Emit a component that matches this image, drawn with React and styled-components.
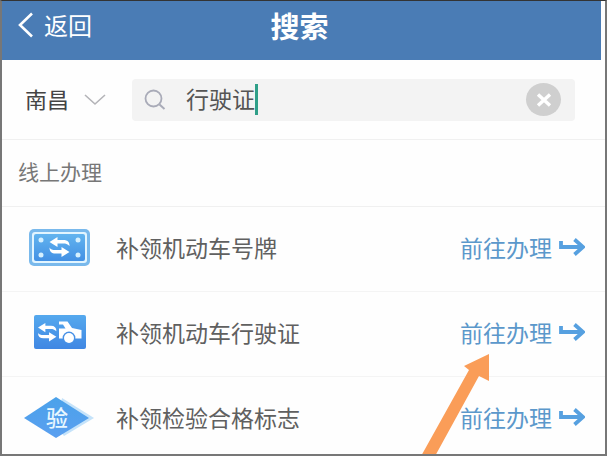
import React, { useState } from "react";
import styled, { createGlobalStyle } from "styled-components";

const services = [
  { name: "补领机动车号牌", Icon: PlateIcon },
  { name: "补领机动车行驶证", Icon: LicenceIcon, pointed: true },
  { name: "补领检验合格标志", Icon: InspectionIcon },
];

function App() {
  const [keyword, setKeyword] = useState("行驶证");

  return (
    <Screen>
      <GlobalStyle />
      <Header>
        <BackButton type="button">
          <svg width="16" height="26" viewBox="0 0 16 26" fill="none">
            <path d="M14 1.5 2 13l12 11.5" stroke="#fff" strokeWidth="2.6" />
          </svg>
          返回
        </BackButton>
        <Title>搜索</Title>
      </Header>

      <SearchBar>
        <City>
          <CitySelect aria-label="城市" defaultValue="南昌">
            <option>南昌</option>
          </CitySelect>
          <svg width="22" height="12" viewBox="0 0 22 12" fill="none">
            <path d="m1 1 10 9L21 1" stroke="#b4b4b8" strokeWidth="1.6" />
          </svg>
        </City>
        <SearchBox>
          <svg width="22" height="22" viewBox="0 0 22 22" fill="none">
            <circle cx="9.5" cy="9.5" r="8" stroke="#a9abb8" strokeWidth="1.8" />
            <path d="m15.5 15.5 5 4.5" stroke="#a9abb8" strokeWidth="2" />
          </svg>
          <Typed>
            <SearchInput
              type="text"
              aria-label="搜索"
              value={keyword}
              onChange={(e) => setKeyword(e.target.value)}
            />
            <Caret />
          </Typed>
          <ClearButton
            type="button"
            aria-label="清除"
            onClick={() => setKeyword("")}
          >
            <svg width="16" height="14" viewBox="0 0 16 14">
              <path
                d="m2 1.5 12 11M14 1.5l-12 11"
                stroke="#fff"
                strokeWidth="3.4"
              />
            </svg>
          </ClearButton>
        </SearchBox>
      </SearchBar>

      <SectionTitle>线上办理</SectionTitle>
      <List>
        {services.map(({ name, Icon, pointed }) => (
          <Row key={name}>
            <Icon />
            <Name>{name}</Name>
            <Action href="#">
              前往办理
              <svg width="26" height="18" viewBox="0 0 26 18" fill="none">
                <path
                  d="M2 3v6h21M15.5 1.5 24 9l-8.500 7.500"
                  stroke="#56a0e0"
                  strokeWidth="3.8"
                />
              </svg>
            </Action>
            {pointed && <Pointer />}
          </Row>
        ))}
      </List>
    </Screen>
  );
}

export default App;

function SwapArrows() {
  return (
    <g fill="#fff">
      <path d="M0 5 8 0v3h6c4 0 6 2 6 6-2-2-4-2.500-6-2.500H8V10Z" />
      <path d="M20 15 12 10v3H6c-3 0-5-.5-6-2.500 0 4 2 6 6 6h6V20Z" />
    </g>
  );
}

function PlateIcon() {
  return (
    <IconSvg viewBox="0 0 70 48">
      <defs>
        <linearGradient id="plate" x2="0" y2="1">
          <stop offset="0" stopColor="#62b4ef" />
          <stop offset="1" stopColor="#4390e4" />
        </linearGradient>
      </defs>
      <rect x="5" y="4" width="61" height="37" rx="5" fill="#79b9ec" />
      <rect x="8" y="7" width="55" height="31" rx="3" fill="#e2f5ff" />
      <rect x="10" y="9" width="51" height="27" rx="2" fill="url(#plate)" />
      <g fill="#d5f0ff">
        <circle cx="17" cy="15" r="2.5" />
        <circle cx="54" cy="15" r="2.5" />
        <circle cx="17" cy="30" r="2.5" />
        <circle cx="54" cy="30" r="2.5" />
      </g>
      <g transform="translate(25.5 12)">
        <SwapArrows />
      </g>
    </IconSvg>
  );
}

function LicenceIcon() {
  return (
    <IconSvg viewBox="0 0 70 48">
      <defs>
        <linearGradient id="licence" x2="0" y2="1">
          <stop offset="0" stopColor="#55a9ee" />
          <stop offset="1" stopColor="#4087e3" />
        </linearGradient>
      </defs>
      <rect x="10" y="5" width="52" height="34" rx="2" fill="url(#licence)" />
      <g transform="translate(14 13) scale(.92)">
        <SwapArrows />
      </g>
      <path
        d="M35 11.500h8.500l4.500 6.500 9.500 2v8.500H35V18.500h6.500l-2.500-4h-4Z"
        fill="#fff"
      />
      <circle cx="45" cy="28" r="6.4" fill="#4690e6" />
      <circle cx="45" cy="28" r="5" fill="#fff" />
    </IconSvg>
  );
}

function InspectionIcon() {
  return (
    <IconSvg viewBox="0 0 70 48">
      <defs>
        <linearGradient id="inspection" x2="0" y2="1">
          <stop offset="0" stopColor="#4ba2ea" />
          <stop offset="1" stopColor="#5a9ff0" />
        </linearGradient>
      </defs>
      <path d="m38 3 32 20-30 18-8-10Z" fill="#c5e3fa" />
      <path d="M32 2 65 23 32 43 0 23Z" fill="url(#inspection)" />
      <IconText x="33" y="31">
        验
      </IconText>
    </IconSvg>
  );
}

function Pointer() {
  return (
    <PointerSvg viewBox="0 0 72 104">
      <path d="M68 0v27l-10-5L13 104H-1L48 16l-5-4Z" fill="#fa9d58" />
    </PointerSvg>
  );
}

const GlobalStyle = createGlobalStyle`
  * {
    box-sizing: border-box;
  }
  body {
    margin: 0;
    background: #fff;
  }
  body, button, input, select {
    font-family: "Noto Sans CJK SC", "Liberation Sans", sans-serif;
  }
`;

const Screen = styled.div`
  height: 100vh;
  overflow-y: auto;
  scrollbar-width: none;
  border: solid #777;
  border-width: 1px 2px 2px;
  border-top-color: #333;
  background: #fefefe;
`;

const Header = styled.header`
  display: grid;
  grid-template-columns: 1fr auto 1fr;
  align-items: center;
  height: 59px;
  margin-right: 4px;
  padding: 0 20px 12px 16px;
  background: #4a7cb5;
  color: #fff;
`;

const BackButton = styled.button`
  display: flex;
  align-items: center;
  gap: 10px;
  padding: 0;
  border: none;
  background: none;
  color: inherit;
  font-size: 24px;
  line-height: 32px;
  cursor: pointer;
`;

const Title = styled.h1`
  margin: 0;
  font-size: 29px;
  line-height: 40px;
  font-weight: 700;
`;

const SearchBar = styled.div`
  display: flex;
  align-items: center;
  gap: 26px;
  height: 80px;
  padding: 0 30px 0 23px;
  border-bottom: 1px solid #f0f0f0;
`;

const City = styled.div`
  display: flex;
  align-items: center;
  gap: 14px;
`;

const CitySelect = styled.select`
  appearance: none;
  padding: 0 0 4px;
  border: none;
  background: none;
  color: #444;
  font-size: 22px;
  line-height: 32px;
`;

const SearchBox = styled.div`
  display: flex;
  flex: 1;
  align-items: center;
  gap: 20px;
  height: 42px;
  padding: 0 14px 0 12px;
  border-radius: 4px;
  background: #f3f3f3;
`;

const Typed = styled.div`
  display: flex;
  flex: 1;
  align-items: center;
`;

const SearchInput = styled.input`
  field-sizing: content;
  padding: 0 0 4px;
  border: none;
  outline: none;
  background: none;
  color: #555;
  font-size: 23px;
  line-height: 32px;
`;

const Caret = styled.span`
  width: 3px;
  height: 31px;
  background: #2f9f88;
`;

const ClearButton = styled.button`
  display: flex;
  align-items: center;
  justify-content: center;
  width: 35px;
  height: 33px;
  padding: 0;
  border: none;
  border-radius: 50%;
  background: #cfcfcf;
  cursor: pointer;
`;

const SectionTitle = styled.h2`
  margin: 0;
  padding: 15px 16px 19px;
  border-bottom: 1px solid #f0f0f0;
  color: #777;
  font-size: 21px;
  line-height: 32px;
  font-weight: 400;
`;

const List = styled.ul`
  margin: 0;
  padding: 0;
  list-style: none;
`;

const Row = styled.li`
  position: relative;
  display: flex;
  align-items: center;
  gap: 22px;
  height: 85px;
  padding: 0 20px 0 22px;
  border-bottom: 1px solid #f4f4f4;
`;

const IconSvg = styled.svg`
  flex: none;
  width: 70px;
  height: 48px;
`;

const IconText = styled.text`
  fill: #e8f7ff;
  font-size: 22px;
  font-weight: 500;
  text-anchor: middle;
`;

const Name = styled.span`
  flex: 1;
  padding-bottom: 4px;
  color: #606060;
  font-size: 23px;
  line-height: 32px;
`;

const Action = styled.a`
  display: flex;
  align-items: center;
  gap: 7px;
  padding-bottom: 4px;
  color: #5b98cb;
  font-size: 23px;
  line-height: 32px;
  text-decoration: none;
`;

const PointerSvg = styled.svg`
  position: absolute;
  top: 62px;
  right: 112px;
  z-index: 1;
  width: 72px;
  height: 104px;
  overflow: visible;
  pointer-events: none;
`;
